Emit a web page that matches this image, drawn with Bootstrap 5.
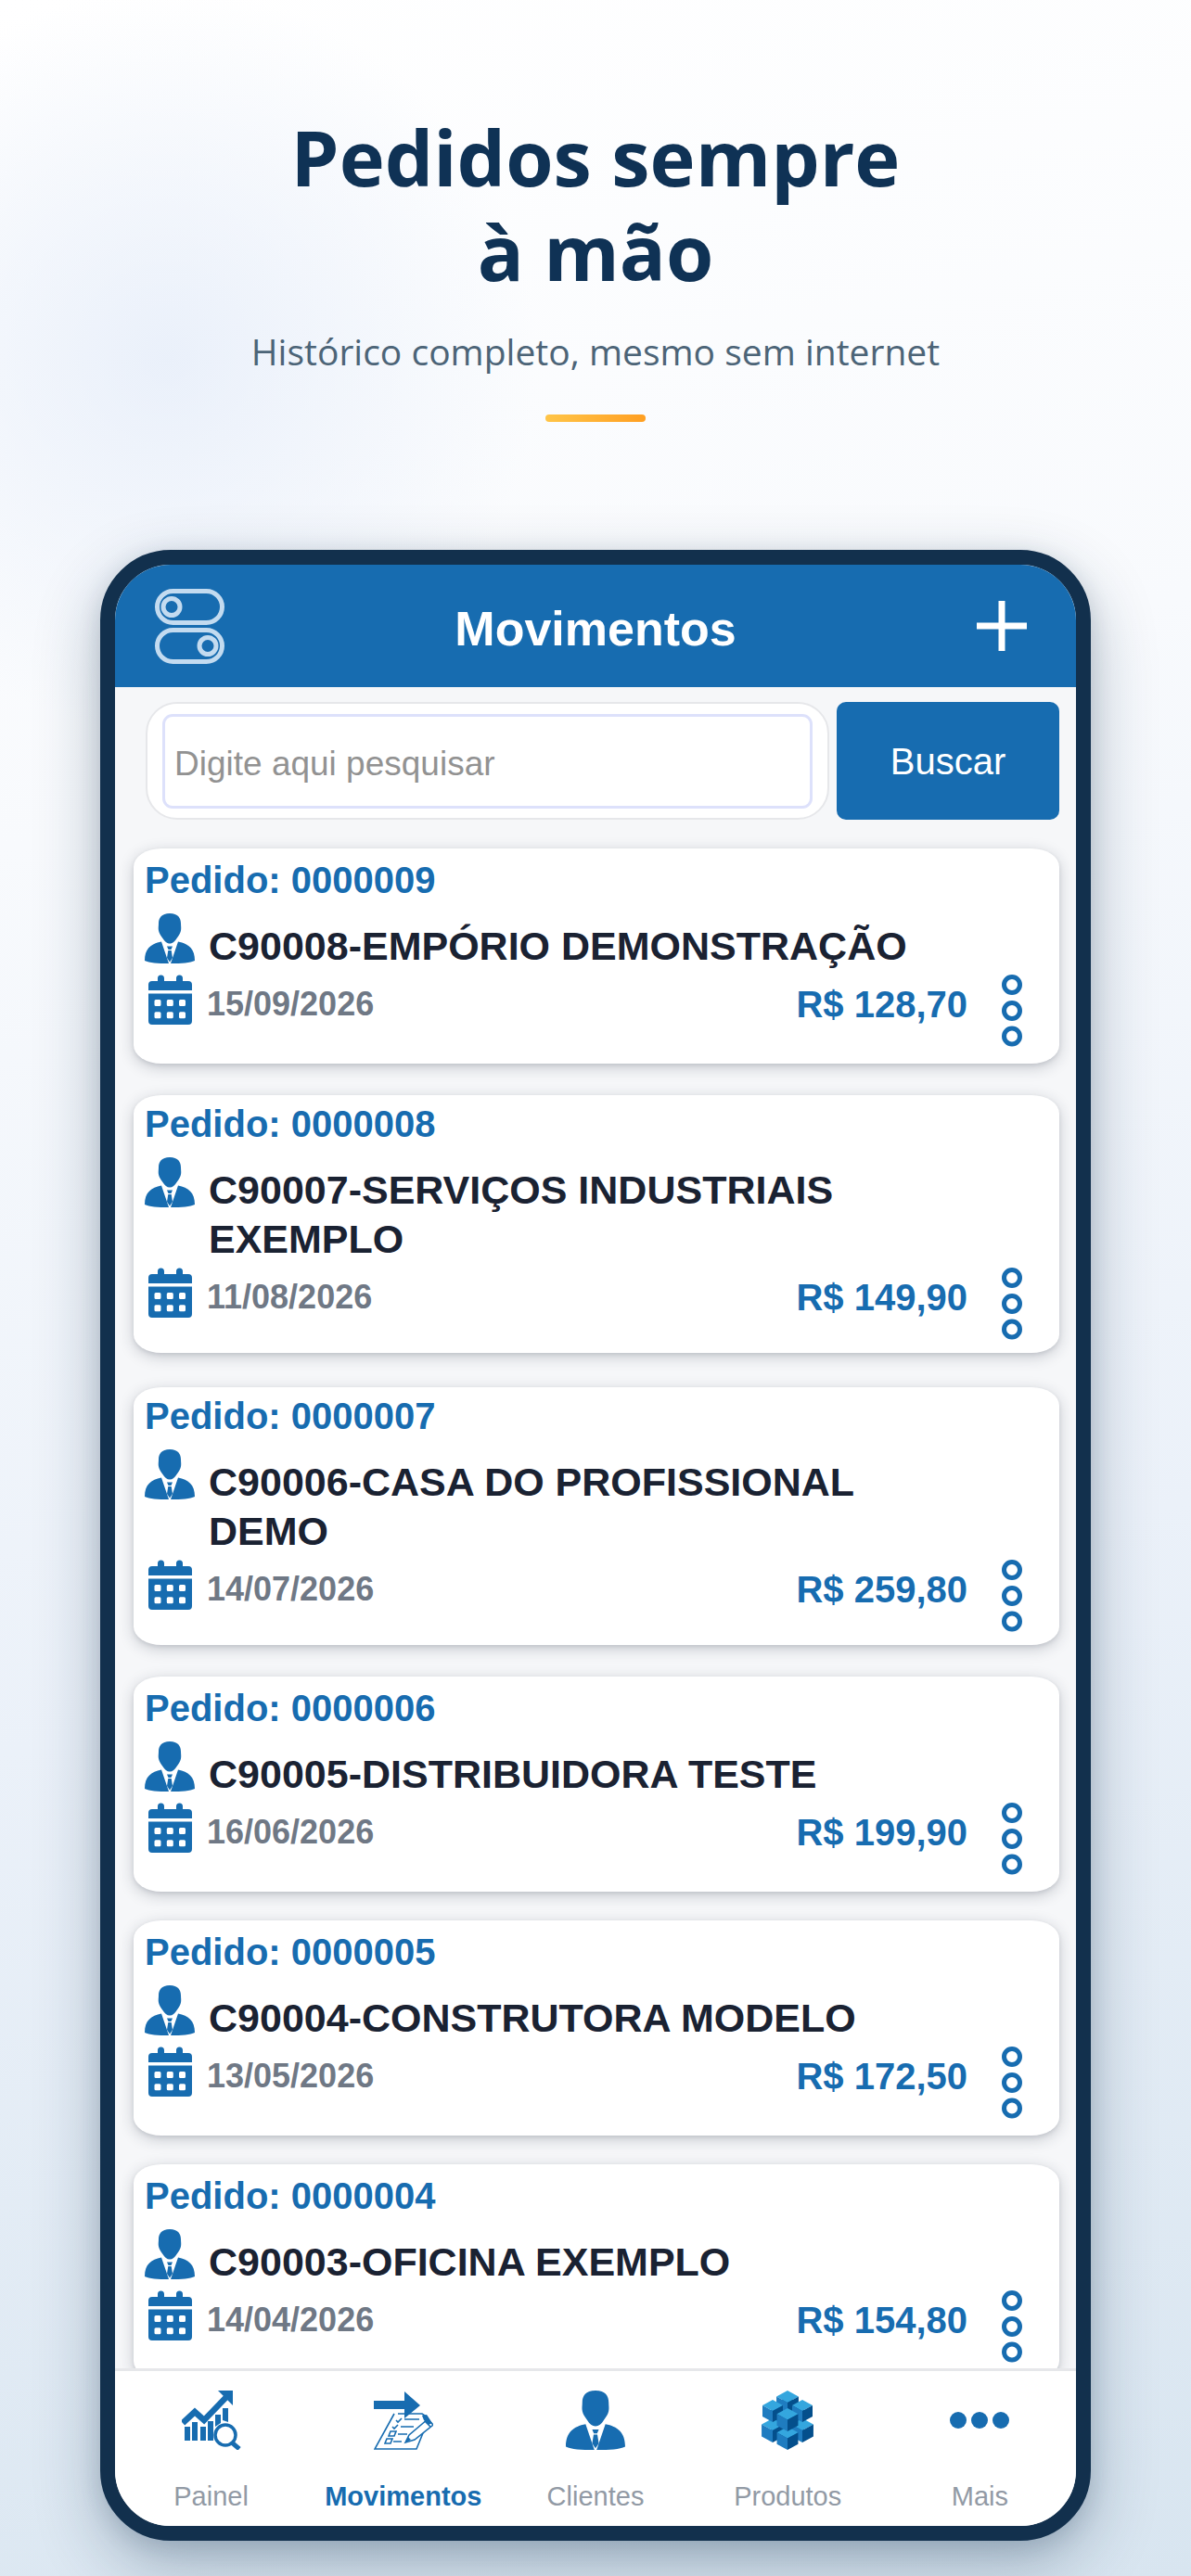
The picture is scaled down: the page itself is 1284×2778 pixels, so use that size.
<!DOCTYPE html>
<html lang="pt-BR">
<head>
<meta charset="utf-8">
<meta name="viewport" content="width=device-width, initial-scale=1">
<title>Movimentos</title>
<link href="https://cdn.jsdelivr.net/npm/bootstrap@5.3.0/dist/css/bootstrap.min.css" rel="stylesheet">
<style>
:root { --brand: #176cb0; --ink: #1a2232; --navy: #12304d; }
body {
  font-family: "Liberation Sans", Arial, sans-serif;
  background:
    radial-gradient(circle at 14% 14%, rgba(228,236,249,.75), rgba(228,236,249,0) 400px),
    linear-gradient(168deg, #ffffff 0%, #f8fafd 30%, #ebf1f9 62%, #d8e5f0 100%);
}
.promo { padding-top: 118px; padding-bottom: 138px; }
.promo-title { font-family: "Open Sans", "Noto Sans", sans-serif; font-size: 83px; line-height: 102px; color: #0f3255; }
.promo-sub { font-family: "Open Sans", "Noto Sans", sans-serif; font-size: 39px; line-height: 56px; color: #4c6477; margin: 29px 0 40px; }
.promo-bar { width: 108px; height: 8px; border-radius: 4px; background: linear-gradient(90deg, #ffc548, #ff9f22); }
.phone-wrap { padding: 0 108px 38px; min-height: 0; }
.phone { border: 16px solid var(--navy); border-radius: 76px; background: #f6f7f9; box-shadow: 0 26px 70px rgba(18,48,77,.3), 0 6px 24px rgba(18,48,77,.14); }
.top-bar { height: 132px; background: var(--brand); padding: 0 40px; }
.top-bar h2 { font-size: 52px; line-height: 60px; padding-top: 6px; }
.icon-btn { border: 0; background: none; padding: 0; line-height: 0; color: #fff; }
.order .icon-btn { color: var(--brand); }
.search { padding: 16px 18px 11px 33px; gap: 8px; }
.search-box { border: 2px solid #e6e7ea; border-radius: 34px; padding: 11px 16px 10px; background: #fff; }
.search-box .form-control { height: 102px; border: 3px solid #dde1fb; border-radius: 11px; padding: 6px 10px 0; font-size: 37px; color: var(--ink); }
.search-box .form-control::placeholder { color: #929292; opacity: 1; }
.search .btn { width: 240px; background: var(--brand); color: #fff; font-size: 40px; border-radius: 10px; padding: 0; }
.orders { padding: 20px 18px 0 20px; gap: 31px; }
.order { flex-shrink: 0; background: #fff; border-radius: 30px / 20px; padding: 10px 40px 18px 12px; box-shadow: 0 4px 16px rgba(30,40,60,.22), 0 2px 4px rgba(30,40,60,.1); }
.order-tall { margin: 3px 0; padding-top: 7px; padding-bottom: 14px; }
.order-no { font-size: 40px; line-height: 48px; color: var(--brand); }
.order-name { font-size: 43px; line-height: 53px; color: var(--ink); padding-top: 9px; max-width: 780px; }
.order-icon { width: 54px; height: 54px; color: var(--brand); flex-shrink: 0; }
.order-head { gap: 15px; margin-top: 12px; }
.order-date { font-size: 36px; line-height: 54px; color: #6f7885; padding-top: 5px; }
.order-price { font-size: 40px; line-height: 54px; color: var(--brand); padding-top: 5px; margin-right: 24px; }
.order-foot { gap: 13px; margin-top: 4px; }
.tabs { height: 170px; border-top: 3px solid #e6e7ea; background: #fff; }
.tabs a { color: #929aa5; font-size: 29px; line-height: 36px; padding-top: 21px; text-decoration: none; gap: 32px; }
.tabs a.active { color: var(--brand); font-weight: 700; }
.tabs svg { color: var(--brand); }
</style>
</head>
<body class="d-flex flex-column vh-100 overflow-hidden">
<svg width="0" height="0" class="position-absolute" aria-hidden="true">
  <symbol id="person" viewBox="0 0 54 54">
    <path fill="currentColor" d="M27 0c-9 0-12 5-12 11 0 3-.6 5 .1 8 .6 3 2.400 5 4.400 8 2 3.500 4.500 5.500 7.500 5.500s5.500-2 7.500-5.500c2-3 3.800-5 4.400-8 .7-3 .1-5 .1-8C39 5 36 0 27 0z"/>
    <path fill="currentColor" d="M18 30.500C7 32.500 0 38 0 51c5 2.500 14 3 26 3zM36 30.500C47 32.500 54 38 54 51c-5 2.500-14 3-26 3z"/>
    <path fill="currentColor" d="M24 35.500h6l-1.500 3.500h-3zM25.300 40h3.400l1.300 8-3 4.500-3-4.500z"/>
  </symbol>
  <symbol id="calendar" viewBox="0 0 54 54">
    <path fill="currentColor" d="M4 17v-6a4 4 0 0 1 4-4h6V4a3 3 0 0 1 7 0v3h13V4a3 3 0 0 1 7 0v3h6a4 4 0 0 1 4 4v6z"/>
    <path fill="currentColor" fill-rule="evenodd" d="M4 20.500h47V50a4 4 0 0 1-4 4H8a4 4 0 0 1-4-4zM12 27q-1.500 0-1.500 1.500v4q0 1.500 1.500 1.500h4q1.500 0 1.500-1.500v-4Q17.500 27 16 27zM25.300 27q-1.500 0-1.500 1.500v4q0 1.500 1.500 1.500h4q1.500 0 1.500-1.500v-4q0-1.500-1.500-1.500zM38.500 27q-1.500 0-1.500 1.500v4q0 1.500 1.500 1.500h4q1.500 0 1.500-1.500v-4q0-1.500-1.500-1.500zM12 40.300q-1.500 0-1.500 1.500v4q0 1.500 1.500 1.500h4q1.500 0 1.500-1.500v-4q0-1.500-1.500-1.500zM25.300 40.300q-1.500 0-1.500 1.500v4q0 1.500 1.500 1.500h4q1.500 0 1.500-1.500v-4q0-1.500-1.500-1.500zM38.500 40.300q-1.500 0-1.500 1.500v4q0 1.500 1.500 1.500h4q1.500 0 1.500-1.500v-4q0-1.500-1.500-1.500z"/>
  </symbol>
  <symbol id="dots" viewBox="0 0 22 78">
    <g fill="none" stroke="currentColor" stroke-width="5"><circle cx="11" cy="11" r="8.500"/><circle cx="11" cy="39" r="8.500"/><circle cx="11" cy="66.500" r="8.500"/></g>
  </symbol>
  <symbol id="cube" viewBox="0 0 22 24">
    <path fill="#34a6de" d="M11 0l11 6-11 6L0 6z"/><path fill="#1f7cc0" d="M0 6l11 6v12L0 18z"/><path fill="#044f8c" d="M22 6l-11 6v12l11-6z"/>
  </symbol>
</svg>

<header class="promo text-center">
  <h1 class="promo-title fw-bold m-0">Pedidos sempre<br>à mão</h1>
  <p class="promo-sub">Histórico completo, mesmo sem internet</p>
  <div class="promo-bar mx-auto"></div>
</header>

<div class="phone-wrap d-flex flex-column flex-grow-1">
<main class="phone d-flex flex-column flex-grow-1 overflow-hidden">
  <div class="top-bar d-flex align-items-center justify-content-between flex-shrink-0">
    <button class="icon-btn" type="button" aria-label="Filtros">
      <svg width="80" height="82" viewBox="0 0 80 82" fill="none" stroke="#c3dbf0" stroke-width="5"><rect x="5.500" y="3.500" width="70" height="34" rx="17"/><circle cx="21" cy="20.500" r="9"/><rect x="5.500" y="45.500" width="70" height="34" rx="17"/><circle cx="60" cy="62.500" r="9"/></svg>
    </button>
    <h2 class="text-white fw-bold m-0">Movimentos</h2>
    <button class="icon-btn" type="button" aria-label="Novo pedido">
      <svg width="80" height="54" viewBox="0 0 80 54" stroke="#fff" stroke-width="7"><path d="M40 0v54M13 27h54"/></svg>
    </button>
  </div>
  <form class="search d-flex flex-shrink-0">
    <div class="search-box flex-grow-1"><input class="form-control" type="text" placeholder="Digite aqui pesquisar" aria-label="Digite aqui pesquisar"></div>
    <button class="btn" type="button">Buscar</button>
  </form>
  <section class="orders d-flex flex-column flex-grow-1 overflow-hidden" id="orders"></section>
  <nav class="tabs d-flex flex-shrink-0">
    <a href="#" class="d-flex flex-column align-items-center col">
      <svg width="64" height="64" viewBox="0 0 64 64"><path fill="none" stroke="currentColor" stroke-width="6.500" d="M1 35l13-12 10 9L49 6"/><path fill="currentColor" d="M39 0h16v16z"/><path fill="currentColor" d="M3 39h6v15H3zM11 34h6v20h-6zM20 39h6v15h-6zM28 33h6v21h-6zM36 26h6v9l-6 4zM44 19h6v15l-6-2z"/><circle cx="47" cy="48" r="11" fill="#fff" stroke="currentColor" stroke-width="3.500"/><path stroke="currentColor" stroke-width="5" d="M54 56l8 7"/></svg>
      <span>Painel</span></a>
    <a href="#" class="active d-flex flex-column align-items-center col" aria-current="page">
      <svg width="64" height="64" viewBox="0 0 64 64"><g fill="none" stroke="currentColor" stroke-width="1.600"><path d="M26 25h26l6 4M22 25L1 63h45l11-27"/><path d="M24 32l2 2 4-4M20 39l2 2 4-4M33 31h16M29 39h14M26 47h10M21 55h9M18 44h6l-2 5h-6zM14 52h6l-2 5h-6z"/><path fill="#fff" d="M34 56l4-8 20-17 6 6-20 16z"/><path d="M55 33l6 6"/></g><path fill="currentColor" d="M0 11h33V1l17 15-17 14V20H0zM34 56l3-6 3 3zM52 27l5-1 6 9-4 2-5-5z"/></svg>
      <span>Movimentos</span></a>
    <a href="#" class="d-flex flex-column align-items-center col">
      <svg width="64" height="64"><use href="#person"/></svg>
      <span>Clientes</span></a>
    <a href="#" class="d-flex flex-column align-items-center col">
      <svg width="56" height="64" viewBox="0 0 56 64"><path fill="#1465aa" d="M28 6l18 12v28L28 58 10 46V18z"/><use href="#cube" x="16" y="0" width="24" height="26"/><use href="#cube" x="0" y="30" width="24" height="26"/><use href="#cube" x="32" y="30" width="24" height="26"/><use href="#cube" x="0" y="10" width="24" height="24"/><use href="#cube" x="32" y="10" width="24" height="24"/><use href="#cube" x="16" y="39" width="24" height="25"/><use href="#cube" x="16" y="19" width="24" height="25"/></svg>
      <span>Produtos</span></a>
    <a href="#" class="d-flex flex-column align-items-center col">
      <svg width="64" height="64" viewBox="0 0 64 64" fill="currentColor"><circle cx="9" cy="32" r="9"/><circle cx="32" cy="32" r="9"/><circle cx="55" cy="32" r="9"/></svg>
      <span>Mais</span></a>
  </nav>
</main>
</div>

<script src="https://cdn.jsdelivr.net/npm/bootstrap@5.3.0/dist/js/bootstrap.bundle.min.js"></script>
<script>
const orders = [
  ["0000009", "C90008-EMPÓRIO DEMONSTRAÇÃO", "15/09/2026", "128,70"],
  ["0000008", "C90007-SERVIÇOS INDUSTRIAIS EXEMPLO", "11/08/2026", "149,90", true],
  ["0000007", "C90006-CASA DO PROFISSIONAL DEMO", "14/07/2026", "259,80", true],
  ["0000006", "C90005-DISTRIBUIDORA TESTE", "16/06/2026", "199,90"],
  ["0000005", "C90004-CONSTRUTORA MODELO", "13/05/2026", "172,50"],
  ["0000004", "C90003-OFICINA EXEMPLO", "14/04/2026", "154,80"]
];
document.getElementById("orders").innerHTML = orders.map(([no, name, date, price, tall]) => `
  <article class="order ${tall ? "order-tall" : ""}">
    <div class="order-no fw-bold">Pedido: ${no}</div>
    <div class="order-head d-flex align-items-start">
      <svg class="order-icon"><use href="#person"/></svg>
      <div class="order-name fw-bold">${name}</div>
    </div>
    <div class="order-foot d-flex align-items-start">
      <svg class="order-icon"><use href="#calendar"/></svg>
      <div class="order-date fw-bold flex-grow-1">${date}</div>
      <div class="order-price fw-bold">R$ ${price}</div>
      <button class="icon-btn" type="button" aria-label="Opções do pedido ${no}"><svg width="22" height="78"><use href="#dots"/></svg></button>
    </div>
  </article>`).join("");
</script>
</body>
</html>
